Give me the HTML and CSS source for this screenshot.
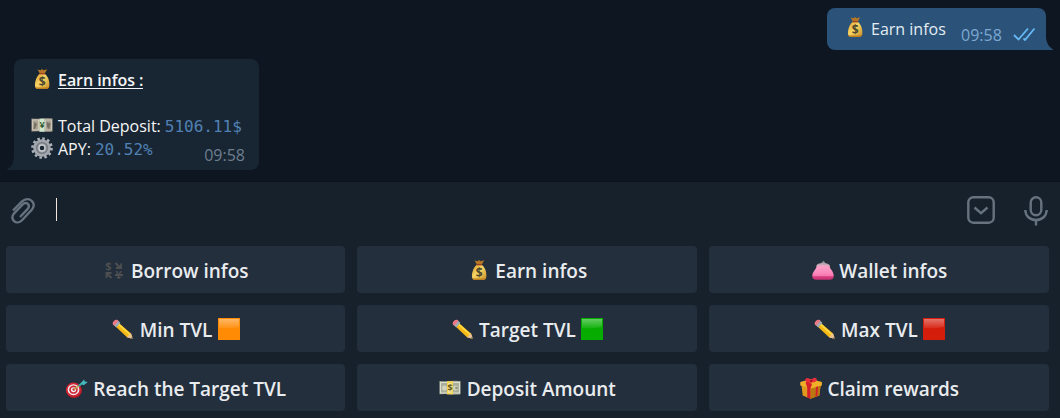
FILE: index.html
```
<!DOCTYPE html>
<html lang="en">
<head>
<meta charset="utf-8">
<title>Earn infos</title>
<link rel="stylesheet" href="styles.css">
</head>
<body>
<svg class="defs" aria-hidden="true">
  <defs>
    <linearGradient id="gold" x1="0" x2="1" y1="0" y2="1"><stop offset="0" stop-color="#d99c2c"/><stop offset=".45" stop-color="#f6d465"/><stop offset="1" stop-color="#c98d26"/></linearGradient>
    <linearGradient id="pink" x1="0" x2="0" y1="0" y2="1"><stop offset="0" stop-color="#f7a5c9"/><stop offset=".5" stop-color="#fb8bbd"/><stop offset=".72" stop-color="#f777af"/><stop offset=".8" stop-color="#d43e80"/><stop offset="1" stop-color="#c92f72"/></linearGradient>
    <linearGradient id="gloss" x1="0" x2="0" y1="0" y2="1"><stop offset="0" stop-color="#fff" stop-opacity=".38"/><stop offset="1" stop-color="#fff" stop-opacity=".06"/></linearGradient>
    <symbol id="bag" viewBox="0 0 22 22">
      <path d="M6.500 1.500l3 .7L11 1l1.600 1.200 3.600-.9-2.500 4.500H9z" fill="#b57626"/>
      <path d="M8.600 5.800h5.300c3 2.500 4.700 6.500 4.500 11-.1 2.700-1.400 4.200-3.400 4.200H7.500c-2.200 0-3.500-1.300-3.600-4 0-4 1.700-8.500 4.700-11.200z" fill="url(#gold)"/>
      <path d="M4 18.700c.4 1.600 1.600 2.300 3.500 2.300H15c2 0 3.100-.8 3.400-2.400-2 1.200-12.200 1.300-14.400.1z" fill="#bd811f"/>
      <path d="M8.600 5.700h5.300" stroke="#9d3f22" stroke-width="1.300"/>
      <text x="11.200" y="18" text-anchor="middle" class="bag-sign">$</text>
    </symbol>
    <symbol id="yen-note" viewBox="0 0 22 22">
      <path d="M.5 4.500Q6 5 11 4.500t10.500 0v13Q16 18 11 17.500T.5 17.500z" fill="#aaa394"/>
      <path d="M1.500 6h6v10h-6zM14.500 6H20.500v10h-6z" fill="none" stroke="#cdc5b6" stroke-width="1"/>
      <path d="M3.500 8l2.500 2-2 5H2.500zM15.500 8l4 1.500-1.500 6-2-3z" fill="#777164"/>
      <path d="M8.500 4.700h5v13h-5z" fill="#cfe8cd"/>
      <text x="11" y="14" text-anchor="middle" class="note-sign yen">¥</text>
    </symbol>
    <symbol id="dollar-note" viewBox="0 0 22 22">
      <path d="M.5 4Q6 4.500 11 4t10.500 0v13.300Q16 17.800 11 17.300T.5 17.300z" fill="#a9ad9c"/>
      <path d="M1.500 5.500h19V16h-19z" fill="none" stroke="#dde0cb" stroke-width="1.100"/>
      <circle cx="5.500" cy="11" r="2.500" fill="#d1d4bb"/><circle cx="16.500" cy="11" r="2.500" fill="#d1d4bb"/><circle cx="17.500" cy="11" r="1.300" fill="#8c927c"/>
      <path d="M8 4.200h6v13.200H8z" fill="#f6d54e"/><path d="M9.300 6h3.400v10H9.300z" fill="#eee2a2"/>
      <text x="11" y="14.300" text-anchor="middle" class="note-sign">$</text>
    </symbol>
    <symbol id="gear" viewBox="0 0 22 22">
      <circle cx="11" cy="11" r="9.500" fill="none" stroke="#aeb3b9" stroke-width="2.600" stroke-dasharray="2.500 2.474"/>
      <circle cx="11" cy="11" r="6.300" fill="none" stroke="#a4a8ae" stroke-width="5"/>
      <circle cx="11" cy="11" r="5.300" fill="none" stroke="#7c8188" stroke-width="1.800"/>
      <circle cx="11" cy="11" r="3.100" fill="none" stroke="#c6cace" stroke-width="1.700"/>
    </symbol>
    <symbol id="exchange" viewBox="0 0 22 22">
      <text x="5.300" y="11" text-anchor="middle" class="exchange-sign">$</text>
      <text x="15.600" y="20" text-anchor="middle" class="exchange-sign">¥</text>
      <path d="M12.500 4l5 5M18 4.500V9h-5M8.500 19l-4.500-4.500M3.500 19v-5h5M12 16h8" fill="none" stroke="#4c4e50" stroke-width="1.900"/>
    </symbol>
    <symbol id="purse" viewBox="0 0 22 22">
      <path d="M9.600 4.500L11.500 2.800l1.500 2" fill="none" stroke="#899097" stroke-width="1.500"/>
      <path d="M4.500 6.500Q5 4 11 4t6.800 2.500l-.7 3H5z" fill="#bda9b3"/>
      <path d="M4.700 7Q11 5 17.500 7c.3 3 4.200 5 4.200 10 0 3-2 3.700-4.500 3.700H5C2 20.700.3 20 .3 17c0-4.500 4.100-6.700 4.400-10z" fill="url(#pink)"/>
    </symbol>
    <symbol id="pencil" viewBox="0 0 22 22">
      <path d="M6 4.300L19 15.500l2 5.500-6-1.800L2.800 7.800z" fill="#f7b916"/>
      <path d="M6.200 5.800L18 16.500" stroke="#ffdb45" stroke-width="1.600"/>
      <path d="M18.800 15.300L21.200 21l-6.300-1.700z" fill="#e8c39a"/><path d="M20.200 18.800l1 2.200-2.300-.7z" fill="#51473d"/>
      <path d="M5.300 1.900l3.100 2.800-4.100 4.700L1.100 6.500z" fill="#9dabb5"/>
      <path d="M1 6.600C-.6 4.800 3.200.5 5.500 2l1 .9-4.300 4.800z" fill="#ef7885"/>
    </symbol>
    <symbol id="square" viewBox="0 0 22 22">
      <path d="M0 0h22v22H0z" fill="currentColor"/><path d="M1 1h20v8Q12 11 1 10z" fill="url(#gloss)"/>
    </symbol>
    <symbol id="target" viewBox="0 0 22 22">
      <ellipse cx="8" cy="13.500" rx="8" ry="7.500" fill="#a91c27"/>
      <ellipse cx="7.500" cy="12.700" rx="6.700" ry="6.300" fill="#eee" stroke="#d32635" stroke-width="1.700"/>
      <ellipse cx="7.500" cy="12.700" rx="3.500" ry="3.300" fill="#eee" stroke="#cf2938" stroke-width="1.700"/>
      <circle cx="7.800" cy="12.500" r="1.300" fill="#c92735"/>
      <path d="M8 12.500l8-6" stroke="#c4a44c" stroke-width="1.500"/><path d="M12.500 9l4-3" stroke="#38a2a7" stroke-width="2"/>
      <path d="M14.500 6.500L18 2.500l.8 2 3 .5-4 3.200z" fill="#43b9bd"/>
    </symbol>
    <symbol id="gift" viewBox="0 0 22 22">
      <path d="M1.500 8l9.500 3.500L20.700 8 19.300 18.500l-8.800 3.300L2.700 18.500z" fill="#df991d"/>
      <path d="M11 11l9.700-3-1.400 10.500-8.800 3.300z" fill="#b97712"/>
      <path d="M.3 5L11 2l10.900 3v3.500L11 11.500.3 8.500z" fill="#f0ae29"/>
      <path d="M5.500 5.500l2.500-1 4 2.500-1.500 4.500v10.300l-3.300-1.300V10.500zM16 10l2-.7-.6 10-1.900.7z" fill="#d51e2c"/>
      <path d="M11 5C7.500 6 4.500 4.700 5.300 2.200 6.500.3 9.500 1 11 3.300c1.500-2.800 4.700-3.300 5.600-1.500C17.500 4.300 14.500 6 11 5z" fill="#e72e3c"/>
      <path d="M10 2.500h2.300v3H10z" fill="#b51323"/>
    </symbol>
  </defs>
</svg>
<main class="app">
  <section class="chat">
    <div class="bubble sent">
      <svg class="emoji"><use href="#bag"/></svg>
      <span class="sent-text">Earn infos</span>
      <time class="time">09:58</time>
      <svg class="ticks" viewBox="0 0 22 14"><path d="M1 8l4.500 4.500L15 1.500M10.500 11.500L12 13 21.500 1.500" /></svg>
      <svg class="tail" viewBox="0 0 7 12"><path d="M0 0Q1 8 7 11.500V12H0z"/></svg>
    </div>
    <div class="bubble received">
      <svg class="tail" viewBox="0 0 7 12"><path d="M7 0Q6 8 0 11.500V12h7z"/></svg>
      <div class="line"><svg class="emoji"><use href="#bag"/></svg><strong class="heading">Earn infos :</strong></div>
      <div class="line deposit"><svg class="emoji"><use href="#yen-note"/></svg><span>Total Deposit:</span><code>5106.11$</code></div>
      <div class="line"><svg class="emoji"><use href="#gear"/></svg><span class="apy">APY:</span><code>20.52%</code><time class="time">09:58</time></div>
    </div>
  </section>
  <section class="composer">
    <svg class="clip" viewBox="0 0 26 28"><path d="M3 13.500L12 4.500C19-1.500 27.500 6 22 12.500l-10 10.800C6.500 29 -1 22 4 16.500l8.500-8.900c4-3.700 8.500.4 5 4.500L10 20"/></svg>
    <span class="caret"></span>
    <svg class="keyboard-toggle" viewBox="0 0 28 28"><rect x="1.300" y="1.300" width="25.400" height="25.400" rx="5"/><path d="M7.500 11.500l6.500 5.700 6.500-5.700"/></svg>
    <svg class="mic" viewBox="0 0 24 30"><rect x="6.700" y="1.300" width="10.600" height="18" rx="5.300"/><path d="M1.300 14c.2 6 4.500 10 10.700 10s10.500-4 10.700-10M12 24v5.500"/></svg>
  </section>
  <section class="keyboard">
    <button class="key"><svg class="emoji"><use href="#exchange"/></svg><span>Borrow infos</span></button>
    <button class="key"><svg class="emoji"><use href="#bag"/></svg><span>Earn infos</span></button>
    <button class="key"><svg class="emoji"><use href="#purse"/></svg><span>Wallet infos</span></button>
    <button class="key"><svg class="emoji"><use href="#pencil"/></svg><span>Min TVL</span><svg class="emoji orange"><use href="#square"/></svg></button>
    <button class="key"><svg class="emoji"><use href="#pencil"/></svg><span>Target TVL</span><svg class="emoji green"><use href="#square"/></svg></button>
    <button class="key"><svg class="emoji"><use href="#pencil"/></svg><span>Max TVL</span><svg class="emoji red"><use href="#square"/></svg></button>
    <button class="key"><svg class="emoji"><use href="#target"/></svg><span>Reach the Target TVL</span></button>
    <button class="key"><svg class="emoji"><use href="#dollar-note"/></svg><span>Deposit Amount</span></button>
    <button class="key"><svg class="emoji"><use href="#gift"/></svg><span>Claim rewards</span></button>
  </section>
</main>
</body>
</html>
```
FILE: styles.css
```
* { box-sizing: border-box; }
body {
  margin: 0;
  background: #17212b;
  color: #f5f5f5;
  font: 16px/23px "Open Sans", "Noto Sans", sans-serif;
}
svg { display: block; flex: none; }
.defs { position: absolute; width: 0; height: 0; }
.app { display: flex; flex-direction: column; width: 1060px; height: 418px; overflow: hidden; background: #17212b; }
.chat { display: flex; flex-direction: column; height: 182px; padding: 8px 14px 0; background: #0e1621; border-bottom: 1px solid #0a121b; }
.bubble { position: relative; border-radius: 8px; white-space: nowrap; }
.sent { display: flex; align-items: flex-start; align-self: flex-end; width: 219px; height: 42px; padding: 9px 11px 0 17px; background: #2b5278; border-bottom-right-radius: 0; }
.sent-text { width: 75px; margin: 1px 15px 0 5px; color: #e4ecf2; }
.time { color: #6d7f8f; line-height: 22px; }
.sent .time { margin: 7px 12px 0 0; width: 40px; color: #7da8d3; }
.ticks { width: 22px; height: 14px; margin-top: 10px; }
.ticks path { fill: none; stroke: #65b9f4; stroke-width: 1.8; }
.tail { position: absolute; bottom: 0; width: 7px; height: 12px; }
.sent .tail { left: 100%; fill: #2b5278; }
.received .tail { right: 100%; fill: #182533; }
.received { align-self: flex-start; width: 245px; height: 111px; margin-top: 9px; padding: 10px 14px 0 17px; background: #182533; border-bottom-left-radius: 0; }
.line { display: flex; height: 23px; gap: 5px; }
.deposit { margin-top: 23px; }
.line code { margin-left: -1px; font: 16px/23px "DejaVu Sans Mono", monospace; color: #5181b3; }
.line .time { margin: 6px 0 0 auto; }
.heading { height: 20px; font-weight: 600; line-height: 23px; letter-spacing: -0.05px; border-bottom: 1px solid #f5f5f5; }
.emoji { width: 22px; height: 22px; }
.bubble .emoji { margin-top: -1px; }
.composer { display: flex; align-items: center; height: 58px; padding: 0 12px 0 10px; }
.composer svg { fill: none; stroke: #66737e; stroke-width: 2.4; }
.clip { width: 26px; height: 28px; }
.caret { width: 1px; height: 23px; margin: 0 auto 3px 20px; background: #f1e7dc; }
.keyboard-toggle { width: 28px; height: 28px; margin: 0 29px 2px 0; }
.mic { width: 24px; height: 30px; }
.keyboard { display: grid; grid-template-columns: 339px 340px 340px; grid-auto-rows: 47px; gap: 12px; padding: 6px; }
.key { display: flex; align-items: center; justify-content: center; gap: 5.5px; padding: 1px 0 0 1px; border: 0; border-radius: 4px; background: #242f3d; color: #e9ecef; font: 600 19px/24px "Open Sans", "Noto Sans", sans-serif; white-space: nowrap; }
.key span { padding-top: 2px; }
.orange { color: #ff8b05; }
.green { color: #06ad00; }
.red { color: #d51d0c; }
.bag-sign { font: bold 12px "Open Sans", sans-serif; fill: #4d482e; }
.note-sign { font: bold 9px "Open Sans", sans-serif; fill: #655923; }
.yen { fill: #385e36; }
.exchange-sign { font: bold 11px "Open Sans", sans-serif; fill: #4c4e50; }
```
